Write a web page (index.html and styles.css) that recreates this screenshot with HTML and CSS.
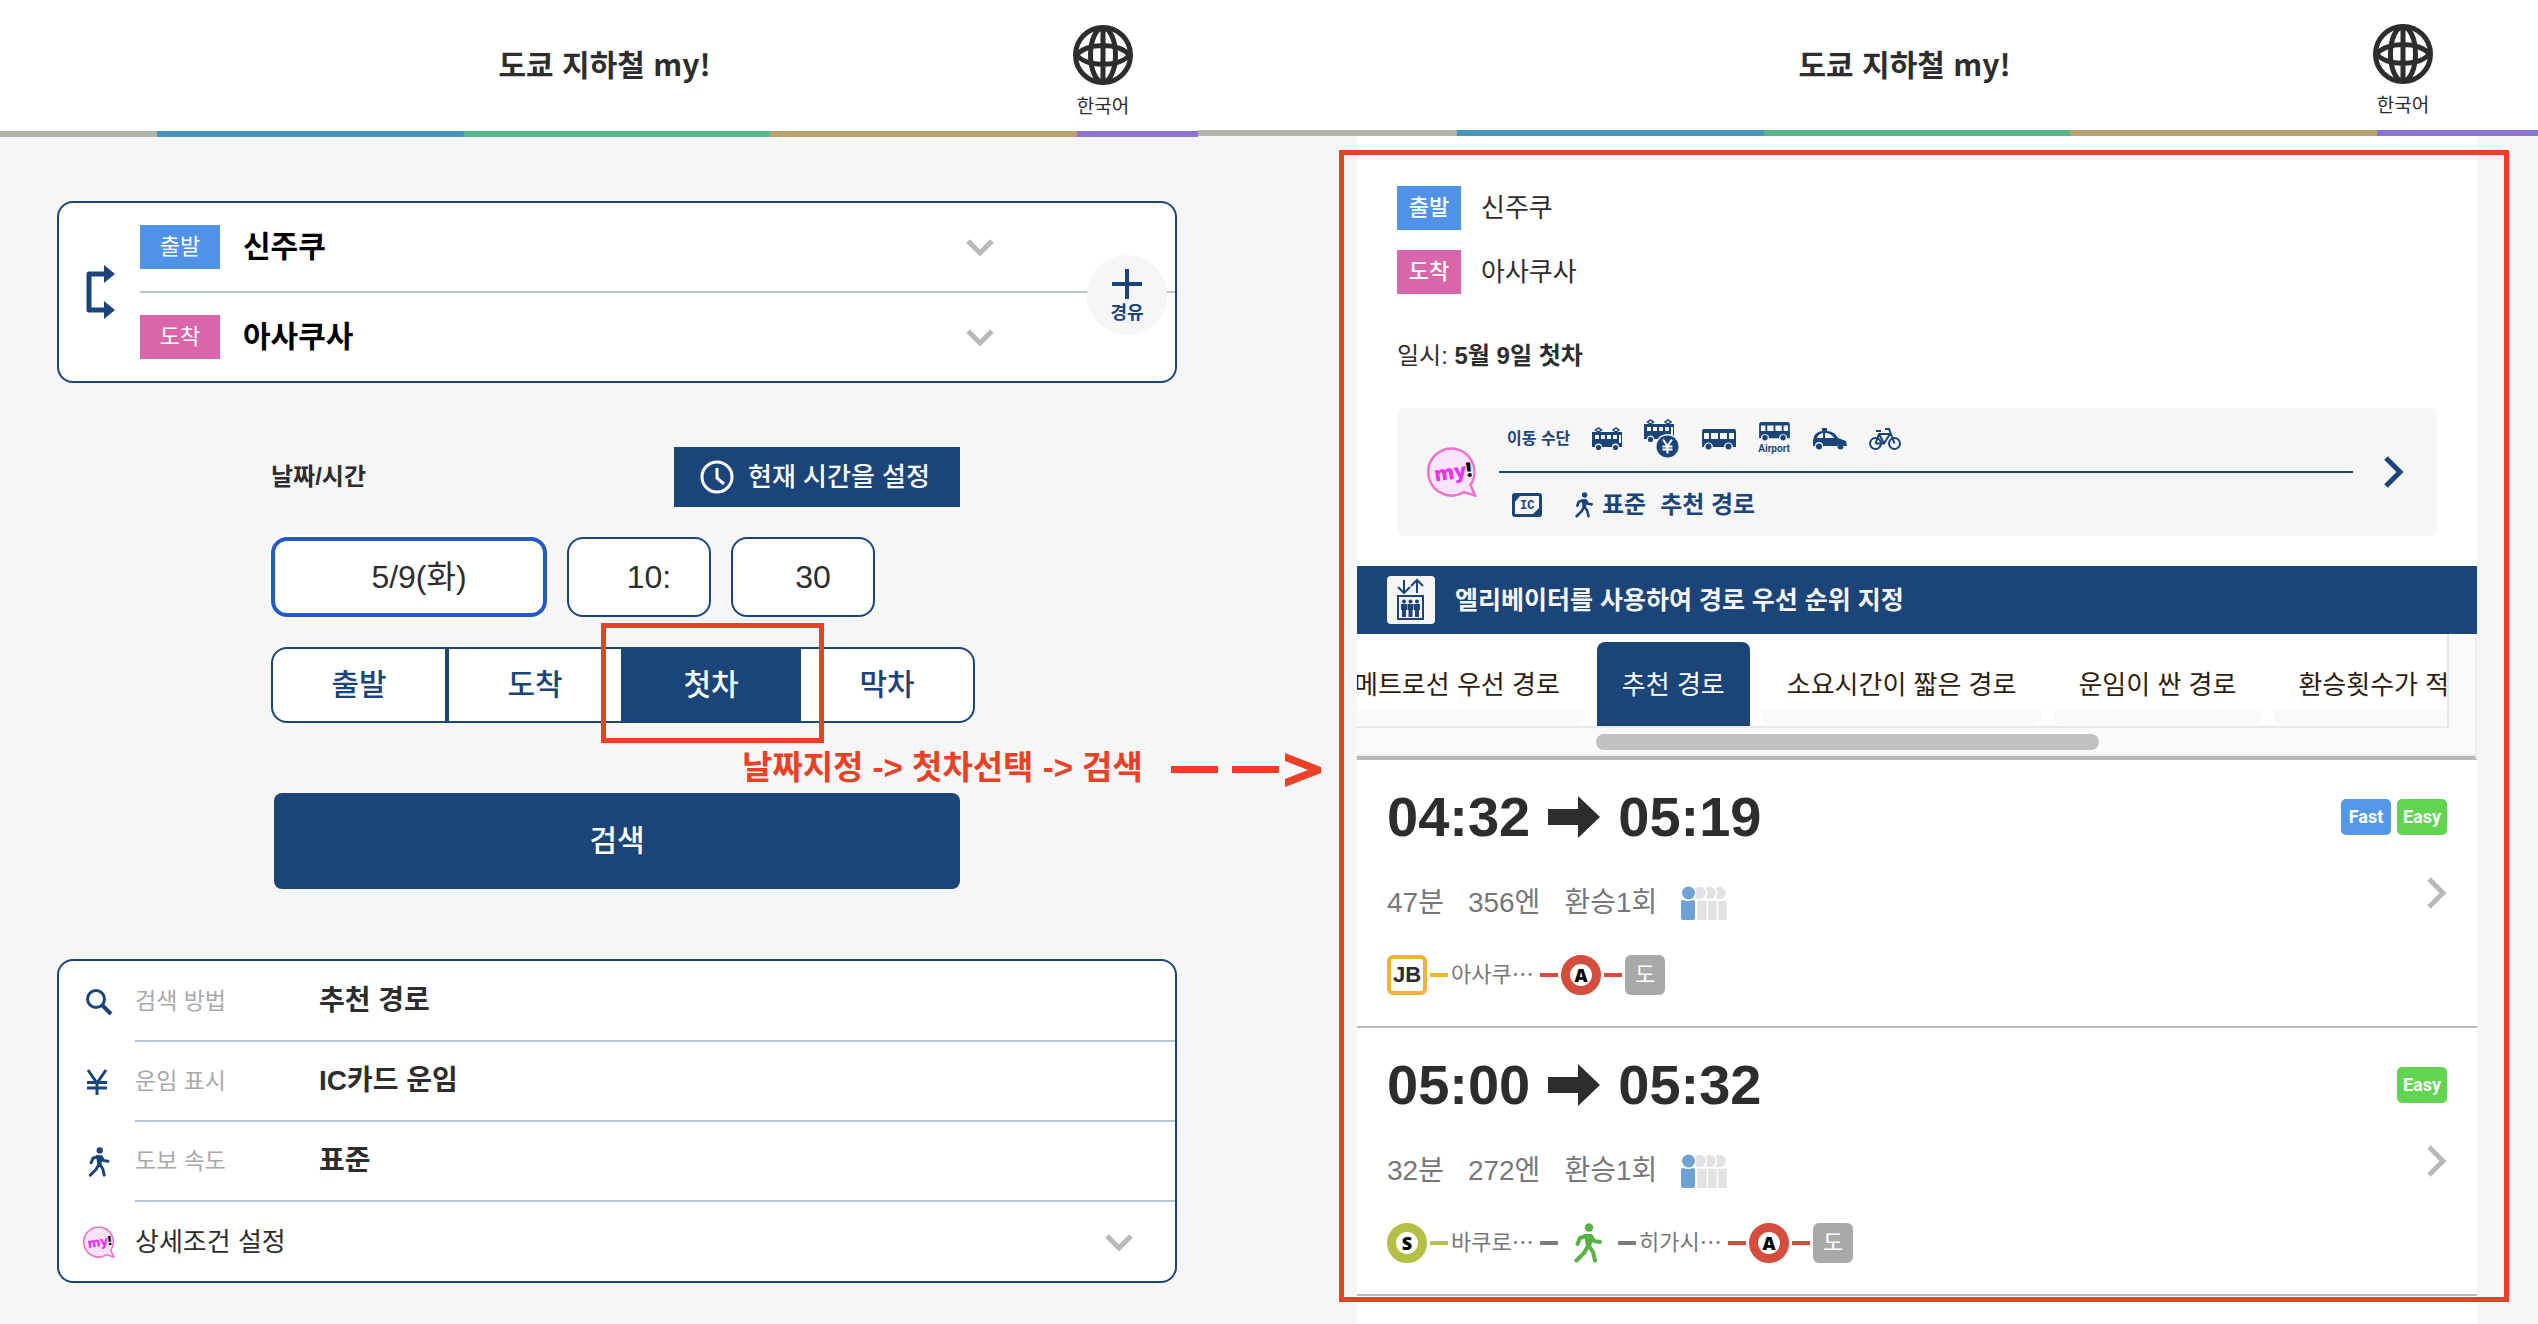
FILE: index.html
```html
<!DOCTYPE html>
<html lang="ko">
<head>
  <meta charset="UTF-8" />
  <meta name="viewport" content="width=device-width, initial-scale=1.0"/>
  <title>도쿄 지하철 my!</title>
  <link rel="stylesheet" href="styles.css">
</head>
<body>
  <!-- shared icons -->
  <svg class="sprite" aria-hidden="true">
    <symbol id="globe" viewBox="0 0 60 60">
      <g fill="none" stroke="#2d2d2d" stroke-width="5">
        <circle cx="30" cy="30" r="27.5"/>
        <ellipse cx="30" cy="30" rx="12.5" ry="27"/>
        <path d="M30 3V57M3 31C12 17 48 17 57 31M3 29C12 43 48 43 57 29"/>
      </g>
    </symbol>
    <symbol id="down" viewBox="0 0 28 18">
      <path d="M2 3L14 15L26 3" fill="none" stroke="#b9b9b9" stroke-width="5"/>
    </symbol>
    <symbol id="next" viewBox="0 0 20 32">
      <path d="M2 2L16 16L2 30" fill="none" stroke="currentColor" stroke-width="5"/>
    </symbol>
    <symbol id="walk" viewBox="0 0 28 40">
      <circle cx="15" cy="4.5" r="4.2" fill="currentColor"/>
      <path d="M14 13L14 23L10 30L2.500 37.500M15 23L19 29L21 37.500M12 13L6 15L3.500 21M17 13L20 18L26 19" fill="none" stroke="currentColor" stroke-width="4" stroke-linecap="round" stroke-linejoin="round"/>
      <path d="M10 11H17L19 15L17 24H12L11 18Z" fill="currentColor"/>
    </symbol>
    <symbol id="train" viewBox="0 0 30 24">
      <g fill="none" stroke="#1b4479" stroke-width="1.500">
        <path d="M6.500 5L3.500 3L6.500 1L9.500 3ZM24 5L21 3L24 1L27 3Z"/>
      </g>
      <path d="M0 5H30V20H27A3.500 3.500 0 0 0 20 20H10A3.500 3.500 0 0 0 3 20H0Z" fill="#1b4479"/>
      <path d="M3 8H7V12H3ZM9 8H13V12H9ZM15 8H19V12H15ZM21 8H25V12H21ZM27 8H29V16H27Z" fill="#f6f6f6"/>
      <circle cx="6.500" cy="20.500" r="2.600" fill="#1b4479"/>
      <circle cx="23.500" cy="20.500" r="2.600" fill="#1b4479"/>
    </symbol>
    <symbol id="bus" viewBox="0 0 34 21">
      <path d="M2 0H32Q34 0 34 3V18H31A4.500 4.500 0 0 0 22 18H11A4.500 4.500 0 0 0 2 18H0V3Q0 0 2 0Z" fill="#1b4479"/>
      <path d="M2 4H7V10H2ZM9 4H16V10H9ZM18 4H25V10H18ZM27 4H32V10H27Z" fill="#f6f6f6"/>
      <circle cx="6.500" cy="17.500" r="3" fill="#1b4479"/>
      <circle cx="26.500" cy="17.500" r="3" fill="#1b4479"/>
    </symbol>
    <symbol id="crowd" viewBox="0 0 46 34">
      <g fill="#e1e2e4" stroke="#fff" stroke-width="1.500">
        <circle cx="38.500" cy="7" r="7"/><rect x="35.500" y="14" width="11" height="21" rx="2"/>
        <circle cx="28.500" cy="7" r="7"/><rect x="25.500" y="14" width="11" height="21" rx="2"/>
        <circle cx="18.500" cy="7" r="7"/><rect x="15.500" y="14" width="11" height="21" rx="2"/>
      </g>
      <circle cx="7.500" cy="7" r="8" fill="#fff"/>
      <circle cx="7.500" cy="7" r="6.500" fill="#70a1d5"/>
      <path d="M0 16Q0 14 2 14Q7.500 16 12 14Q14 14 14 16V32Q14 34 12 34H2Q0 34 0 32Z" fill="#70a1d5"/>
    </symbol>
    <symbol id="arrow" viewBox="0 0 52 42">
      <path d="M0 13H30V0L52 21L30 42V29H0Z" fill="#2d2d2d"/>
    </symbol>
  </svg>

  <div class="page">
    <section class="pane search-pane">
      <header class="header">
        <h1>도쿄 지하철 my!</h1>
        <button class="lang"><svg width="60" height="60"><use href="#globe"/></svg>한국어</button>
      </header>

      <div class="search-body">
        <div class="card stations">
          <svg class="swap" width="30" height="54" viewBox="0 0 30 54">
            <path d="M22 9H4V45H22" fill="none" stroke="#1b4479" stroke-width="5" stroke-linejoin="round"/>
            <path d="M19 0L30 9L19 18ZM19 36L30 45L19 54Z" fill="#1b4479"/>
          </svg>
          <div class="station-rows">
            <div class="station">
              <label class="tag" for="from">출발</label>
              <select id="from"><option>신주쿠</option></select>
              <svg class="down" width="28" height="18"><use href="#down"/></svg>
            </div>
            <div class="station">
              <label class="tag arrive" for="to">도착</label>
              <select id="to"><option>아사쿠사</option></select>
              <svg class="down" width="28" height="18"><use href="#down"/></svg>
            </div>
          </div>
          <button class="via">
            <svg width="30" height="30" viewBox="0 0 30 30"><path d="M15 0V30M0 15H30" stroke="#1b4479" stroke-width="4"/></svg>
            경유
          </button>
        </div>

        <form class="time-form">
          <div class="time-head">
            <label for="date">날짜/시간</label>
            <button type="button" class="now">
              <svg width="34" height="34" viewBox="0 0 34 34" fill="none" stroke="#fff" stroke-width="3"><circle cx="17" cy="17" r="15"/><path d="M17 8V18L24 24"/></svg>
              현재 시간을 설정
            </button>
          </div>
          <div class="time-fields">
            <select id="date" class="date"><option>5/9(화)</option></select>
            <select aria-label="시"><option>10:</option></select>
            <select aria-label="분"><option>30</option></select>
          </div>
          <div class="types">
            <button type="button">출발</button>
            <button type="button">도착</button>
            <button type="button" class="active">첫차</button>
            <button type="button">막차</button>
          </div>
          <p class="note">날짜지정 -&gt; 첫차선택 -&gt; 검색
            <svg width="152" height="34" viewBox="0 0 152 34"><path d="M0 13H47V20H0ZM61 13H108V20H61ZM114 0L150 14V20L114 34V26L137 17L114 8Z" fill="#ea4025"/></svg>
          </p>
          <button type="submit" class="submit">검색</button>
        </form>

        <div class="card settings">
          <button class="setting">
            <svg width="28" height="28" viewBox="0 0 28 28" fill="none" stroke="#1b4479"><circle cx="11" cy="11" r="8.500" stroke-width="3"/><path d="M17 17L26 26" stroke-width="4"/></svg>
            <span class="line"><span class="name">검색 방법</span><b>추천 경로</b></span>
          </button>
          <button class="setting">
            <svg width="28" height="28" viewBox="0 0 28 28" fill="none" stroke="#1b4479" stroke-width="3"><path d="M3 2L12 15L21 2M12 14V27M2 14.500H22M2 20H22"/></svg>
            <span class="line"><span class="name">운임 표시</span><b>IC카드 운임</b></span>
          </button>
          <button class="setting">
            <svg width="28" height="30"><use href="#walk"/></svg>
            <span class="line"><span class="name">도보 속도</span><b>표준</b></span>
          </button>
          <button class="setting">
            <svg width="32" height="32" viewBox="0 0 50 50">
              <path d="M25 1.500A23.500 23.500 0 1 0 37 45L48 48.500L43.500 38A23.500 23.500 0 0 0 25 1.500Z" fill="#fbe3fb" stroke="#ec73c6" stroke-width="2.500"/>
              <g class="my" transform="rotate(-8 25 25)"><text x="7" y="32">my<tspan fill="#000">!</tspan></text></g>
            </svg>
            <span class="line">상세조건 설정<svg class="down" width="28" height="18"><use href="#down"/></svg></span>
          </button>
        </div>
      </div>
    </section>

    <section class="pane result-pane">
      <header class="header">
        <h1>도쿄 지하철 my!</h1>
        <button class="lang"><svg width="60" height="60"><use href="#globe"/></svg>한국어</button>
      </header>

      <main class="results">
        <div class="summary">
          <p><span class="tag">출발</span>신주쿠</p>
          <p><span class="tag arrive">도착</span>아사쿠사</p>
          <p class="when">일시:&nbsp;<b>5월 9일 첫차</b></p>
        </div>

        <a class="options" href="#">
          <svg width="50" height="50" viewBox="0 0 50 50">
            <path d="M25 1.500A23.500 23.500 0 1 0 37 45L48 48.500L43.500 38A23.500 23.500 0 0 0 25 1.500Z" fill="#fbe3fb" stroke="#ec73c6" stroke-width="2.500"/>
            <g class="my" transform="rotate(-8 25 25)"><text x="7" y="32">my<tspan fill="#000">!</tspan></text></g>
          </svg>
          <div class="option-rows">
            <div class="option-row transport">
              <span>이동 수단</span>
              <svg width="30" height="24"><use href="#train"/></svg>
              <svg width="36" height="40" viewBox="0 0 36 40">
                <use href="#train" width="30" height="24"/>
                <circle cx="23.500" cy="27.500" r="12.500" fill="#f6f6f6"/><circle cx="23.500" cy="27.500" r="11" fill="#1b4479"/>
                <path d="M19 20.500L23.500 27L28 20.500M23.500 27V34.500M18.500 27.500H28.500M18.500 30.500H28.500" fill="none" stroke="#fff" stroke-width="2"/>
              </svg>
              <svg width="34" height="21"><use href="#bus"/></svg>
              <span class="airport"><svg width="31" height="19"><use href="#bus"/></svg>Airport</span>
              <svg width="34" height="22" viewBox="0 0 34 22">
                <path d="M9 0H14V3Q21 3 25 10L33 13L34 18H31A4 4 0 0 0 24 18H10A4 4 0 0 0 2 18H0V12Q1 4 9 3Z" fill="#1b4479"/>
                <path d="M4 10Q5 6 10 5V10ZM12 5Q18 5 21 10H12Z" fill="#f6f6f6"/>
                <circle cx="6" cy="18.500" r="3" fill="#1b4479"/><circle cx="27.500" cy="18.500" r="3" fill="#1b4479"/>
              </svg>
              <svg width="32" height="22" viewBox="0 0 32 22" fill="none" stroke="#1b4479" stroke-width="2">
                <circle cx="6.500" cy="15.500" r="5.500"/><circle cx="25.500" cy="15.500" r="5.500"/>
                <path d="M6.500 15.500L10 6H21L15 15.500H6.500M10 6L15 15.500M25.500 15.500L20 1H16M7 3H12"/>
              </svg>
            </div>
            <div class="option-row">
              <svg width="30" height="24" viewBox="0 0 30 24">
                <rect width="30" height="24" rx="3" fill="#1b4479"/>
                <path d="M8 3H27V15L21 21H3V9Z" fill="#f6f6f6"/>
                <text x="8" y="16" font-family="Liberation Mono, monospace" font-weight="700" font-size="12" fill="#1b4479">IC</text>
              </svg>
              <svg class="walk" width="18" height="26"><use href="#walk"/></svg>
              <b>표준</b>
              <b>추천 경로</b>
            </div>
          </div>
          <svg class="next" width="20" height="32"><use href="#next"/></svg>
        </a>

        <a class="elevator" href="#">
          <svg width="48" height="48" viewBox="0 0 48 48">
            <rect width="48" height="48" rx="4" fill="#f6f6f6"/>
            <g fill="none" stroke="#1b4479" stroke-width="2"><path d="M17 4V16M11 11L17 17L23 11M30 17V5M24 10L30 4L36 10"/><rect x="11" y="20" width="25" height="23"/></g>
            <g fill="#1b4479"><circle cx="17" cy="25.500" r="2"/><circle cx="23.500" cy="25.500" r="2"/><circle cx="30" cy="25.500" r="2"/><path d="M14 28H20V34H19V41H15V34H14ZM20.500 28H26.500V34H25.500V41H21.500V34H20.500ZM27 28H33V34H32V41H28V34H27Z"/></g>
          </svg>
          엘리베이터를 사용하여 경로 우선 순위 지정
        </a>

        <div class="tab-area">
          <nav class="tabs">
            <button>메트로선 우선 경로</button>
            <button class="active">추천 경로</button>
            <button>소요시간이 짧은 경로</button>
            <button>운임이 싼 경로</button>
            <button>환승횟수가 적은 경로</button>
          </nav>
          <div class="scrollbar"><div class="thumb"></div></div>
        </div>

        <a class="route" href="#">
          <div class="route-top">
            <h2>04:32 <svg width="52" height="42"><use href="#arrow"/></svg> 05:19</h2>
            <span class="badge fast">Fast</span><span class="badge">Easy</span>
          </div>
          <div class="route-info">
            <span>47분</span><span>356엔</span><span>환승1회</span>
            <svg width="46" height="34"><use href="#crowd"/></svg>
            <svg class="next" width="20" height="32"><use href="#next"/></svg>
          </div>
          <div class="route-line">
            <span class="line-box">JB</span><i class="dash jb"></i><span class="stop">아사쿠⋯</span><i class="dash red"></i>
            <span class="line-circle">A</span><i class="dash red"></i><span class="end">도</span>
          </div>
        </a>

        <a class="route" href="#">
          <div class="route-top">
            <h2>05:00 <svg width="52" height="42"><use href="#arrow"/></svg> 05:32</h2>
            <span class="badge">Easy</span>
          </div>
          <div class="route-info">
            <span>32분</span><span>272엔</span><span>환승1회</span>
            <svg width="46" height="34"><use href="#crowd"/></svg>
            <svg class="next" width="20" height="32"><use href="#next"/></svg>
          </div>
          <div class="route-line">
            <span class="line-circle shinjuku">S</span><i class="dash lime"></i><span class="stop">바쿠로⋯</span><i class="dash"></i>
            <svg class="walk" width="54" height="40"><use href="#walk"/></svg><i class="dash"></i><span class="stop">히가시⋯</span><i class="dash red"></i>
            <span class="line-circle">A</span><i class="dash red"></i><span class="end">도</span>
          </div>
        </a>
      </main>
    </section>
  </div>
</body>
</html>
```

FILE: styles.css
```css
* {
  box-sizing: border-box;
}
body {
  margin: 0;
  font-family: "Liberation Sans", "Noto Sans CJK KR", sans-serif;
  font-size: 26px;
  line-height: 40px;
  color: #2d2d2d;
  background: #f6f6f6;
}
h1, h2, p {
  margin: 0;
}
button, select {
  font: inherit;
  color: inherit;
  margin: 0;
  padding: 0;
  border: none;
  background: none;
  appearance: none;
  cursor: pointer;
}
a {
  color: inherit;
  text-decoration: none;
}
svg {
  display: block;
  flex: none;
}
.sprite {
  position: absolute;
  width: 0;
  height: 0;
}
.my {
  fill: #e633f5;
  font-family: "Open Sans", sans-serif;
  font-size: 20px;
  font-weight: 800;
}
.page {
  display: grid;
  grid-template-columns: 1198fr 1340fr;
  min-height: 100vh;
}
.pane {
  display: flex;
  flex-direction: column;
  min-width: 0;
}

/* header */
.header {
  display: grid;
  grid-template-columns: 1fr auto 1fr;
  align-items: start;
  height: 137px;
  padding: 0 65px 6px 76px;
  background:
    linear-gradient(to right, #b3b3aa 157px, #4597bd 157px 464px, #56b888 464px 770px, #bba16f 770px 1077px, #8a73d3 1077px) bottom / 100% 6px no-repeat,
    #fff;
}
.result-pane .header {
  height: 136px;
  padding: 0 105px 6px 178px;
  background:
    linear-gradient(to right, #b3b3aa 259px, #4597bd 259px 566px, #56b888 566px 872px, #bba16f 872px 1179px, #8a73d3 1179px) bottom / 100% 6px no-repeat,
    #fff;
}
.header h1 {
  grid-column: 2;
  font-family: "Noto Sans CJK KR", sans-serif;
  font-size: 30px;
  line-height: 126px;
}
.lang {
  justify-self: end;
  display: flex;
  flex-direction: column;
  align-items: center;
  gap: 8px;
  padding-top: 25px;
  font-size: 19px;
  line-height: 28px;
}
.result-pane .lang {
  padding-top: 24px;
}

/* search side */
.search-body {
  padding: 64px 21px 40px 57px;
}
.card {
  background: #fff;
  border: 2px solid #1b4479;
  border-radius: 16px;
}
.stations {
  position: relative;
  display: flex;
  align-items: center;
}
.swap {
  margin: 0 25px 0 26px;
}
.station-rows {
  flex: 1;
}
.station {
  display: flex;
  align-items: center;
  height: 88px;
}
.station + .station {
  border-top: 2px solid #b6c5d8;
  height: 90px;
}
.tag {
  width: 80px;
  line-height: 44px;
  background: #4f92e8;
  color: #fff;
  font-size: 22px;
  text-align: center;
}
.tag.arrive {
  background: #d966ab;
}
.station select {
  flex: 1;
  margin-left: 23px;
  font-size: 30px;
  font-weight: 700;
  color: #000;
}
.station .down {
  margin-right: 181px;
}
.via {
  position: absolute;
  right: 8px;
  top: 52px;
  width: 80px;
  height: 80px;
  border-radius: 50%;
  background: #f6f6f6;
  color: #1b4479;
  font-size: 18px;
  font-weight: 700;
  line-height: 24px;
}
.via svg {
  margin: 4px auto 2px;
}
.time-form {
  position: relative;
  max-width: 692px;
  margin: 64px auto 70px;
}
.time-head {
  display: flex;
  align-items: center;
  justify-content: space-between;
  margin-right: 3px;
}
.time-head label {
  font-size: 24px;
  font-weight: 700;
}
.now {
  display: flex;
  align-items: center;
  justify-content: center;
  gap: 14px;
  width: 286px;
  height: 60px;
  padding-right: 4px;
  background: #1b4479;
  color: #fff;
  font-weight: 500;
}
.time-fields {
  display: flex;
  gap: 20px;
  margin: 30px 0;
}
.time-fields select {
  width: 144px;
  height: 80px;
  padding-left: 20px;
  border: 2px solid #1b4479;
  border-radius: 16px;
  background: #fff;
  font-size: 32px;
  text-align: center;
  text-align-last: center;
}
.time-fields .date {
  width: 276px;
  border: 4px solid #2559c9;
  box-shadow: 0 0 0 2px #fff;
}
.types {
  display: flex;
}
.types button {
  position: relative;
  flex: none;
  width: 176px;
  height: 76px;
  border: 2px solid #1b4479;
  background: #fff;
  color: #1b4479;
  font-size: 30px;
  font-weight: 500;
}
.types button:first-child {
  border-radius: 16px 0 0 16px;
}
.types button:last-child {
  border-radius: 0 16px 16px 0;
}
.types .active {
  background: #1b4479;
  color: #fff;
}
.types .active::after {
  content: "";
  position: absolute;
  z-index: 1;
  inset: -26px -27px -22px -24px;
  border: 5px solid #ea4025;
}
.note {
  position: absolute;
  left: 471px;
  top: 297px;
  display: flex;
  align-items: center;
  gap: 28px;
  color: #ea4025;
  font-size: 33px;
  font-weight: 700;
  line-height: 48px;
  white-space: nowrap;
}
.note svg {
  margin-top: 4px;
}
.submit {
  display: block;
  width: 686px;
  height: 96px;
  margin: 70px auto 0;
  border-radius: 8px;
  background: #1b4479;
  color: #fff;
  font-size: 30px;
  font-weight: 500;
}
.settings {
  padding-top: 1px;
}
.setting {
  display: flex;
  align-items: center;
  width: 100%;
  height: 80px;
  padding-left: 23px;
  color: #1b4479;
}
.setting > svg {
  width: 34px;
}
.setting .line {
  display: flex;
  align-items: center;
  flex: 1;
  height: 80px;
  margin-left: 19px;
  border-bottom: 2px solid #b6c5d8;
  color: #2d2d2d;
}
.setting:last-child, .setting:last-child .line {
  height: 79px;
  border: none;
}
.setting .name {
  width: 184px;
  color: #a9a9a9;
  font-size: 23px;
  text-align: left;
}
.setting b {
  font-size: 28px;
}
.setting .down {
  margin: 0 42px 0 auto;
}

/* result side */
.results {
  position: relative;
  flex: 1;
  margin: 0 61px 0 159px;
  background: #fff;
}
.results::after {
  content: "";
  position: absolute;
  inset: 14px -32px 22px -18px;
  border: 5px solid #ea4025;
  pointer-events: none;
}
.summary {
  padding: 50px 40px 0;
}
.summary p {
  display: flex;
  align-items: center;
  gap: 20px;
  height: 44px;
  margin-bottom: 20px;
}
.summary .tag {
  width: 64px;
  font-weight: 500;
}
.summary .when {
  gap: 0;
  margin: 40px 0 30px;
  font-size: 24px;
}
.options {
  display: flex;
  align-items: center;
  height: 128px;
  margin: 0 40px 30px;
  padding: 0 33px 0 30px;
  border-radius: 8px;
  background: #f6f6f6;
  color: #1b4479;
}
.option-rows {
  flex: 1;
  margin: 0 31px 0 22px;
}
.option-row {
  display: flex;
  align-items: center;
  height: 64px;
  padding-left: 13px;
  font-size: 24px;
}
.option-row b + b {
  margin-left: 14px;
}
.option-row .walk {
  margin: 0 9px 0 33px;
}
.transport {
  gap: 22px;
  height: 66px;
  padding-left: 8px;
  border-bottom: 2px solid #1b4479;
  font-size: 16px;
  font-weight: 700;
}
.airport {
  width: 33px;
  font-family: "Roboto", sans-serif;
  font-size: 10px;
  line-height: 16px;
}
.airport svg {
  margin: 0 auto;
}
.elevator {
  display: flex;
  align-items: center;
  gap: 20px;
  height: 68px;
  padding-left: 30px;
  background: #1b4479;
  color: #f6f6f6;
  font-size: 25px;
  font-weight: 700;
}
.tab-area {
  border-right: 2px solid #eee;
  border-bottom: 4px solid #b7b7b7;
  background: #fafafa;
}
.tabs {
  display: flex;
  gap: 12px;
  height: 94px;
  margin-right: 26px;
  padding-top: 8px;
  border: solid #e8e8e8;
  border-width: 0 2px 2px 0;
  background: #fff;
  overflow: hidden;
}
.tabs button {
  flex: none;
  height: 83px;
  padding: 18px 25px 0;
  border-bottom: 15px solid #f9f9f9;
  border-radius: 8px;
  color: #2e1c0c;
}
.tabs button:first-child {
  margin-left: -28px;
}
.tabs .active {
  height: 84px;
  padding-top: 2px;
  border: none;
  border-radius: 8px 8px 0 0;
  background: #1b4479;
  color: #fff;
}
.scrollbar {
  height: 28px;
  padding: 6px 0;
  border-bottom: 2px solid #eee;
}
.thumb {
  width: 45%;
  height: 16px;
  margin-left: 239px;
  border-radius: 8px;
  background: #c1c1c1;
}
.route {
  display: block;
  height: 268px;
  padding: 29px 30px 0;
  border-bottom: 2px solid #b9b9b9;
}
.route-top {
  display: flex;
  align-items: center;
  gap: 6px;
  height: 56px;
}
.route h2 {
  display: flex;
  align-items: center;
  gap: 18px;
  margin-right: auto;
  font-size: 56px;
  line-height: 56px;
}
.badge {
  width: 50px;
  border-radius: 5px;
  background: #61d452;
  color: #fff;
  font-family: "Roboto", sans-serif;
  font-size: 18px;
  font-weight: 700;
  line-height: 36px;
  text-align: center;
}
.badge.fast {
  background: #5399e8;
}
.route-info {
  display: flex;
  align-items: center;
  gap: 24px;
  height: 60px;
  margin-top: 28px;
  color: #777;
  font-size: 28px;
}
.route-info .next {
  margin: 0 0 20px auto;
  color: #b9b9b9;
}
.route-line {
  display: flex;
  align-items: center;
  gap: 3px;
  height: 40px;
  margin-top: 22px;
  color: #777;
  font-size: 22px;
}
.dash {
  width: 18px;
  height: 4px;
  background: #7b7b7b;
}
.dash.jb {
  background: #f0b23f;
}
.dash.red {
  background: #d54d3c;
}
.dash.lime {
  background: #b4c045;
}
.stop {
  width: 86px;
  white-space: nowrap;
}
.line-box, .line-circle, .end {
  width: 40px;
  height: 40px;
  border-radius: 6px;
  text-align: center;
}
.line-box {
  border: 4px solid #f0b23f;
  color: #2d2d2d;
  font-weight: 700;
  line-height: 32px;
}
.line-circle {
  border: 9px solid #d54d3c;
  border-radius: 50%;
  color: #000;
  font-family: "Open Sans", sans-serif;
  font-size: 18px;
  font-weight: 800;
  line-height: 22px;
}
.line-circle.shinjuku {
  border-color: #b4c045;
}
.end {
  background: #a9a9a9;
  color: #fff;
}
.route-line .walk {
  color: #57b244;
}
```
